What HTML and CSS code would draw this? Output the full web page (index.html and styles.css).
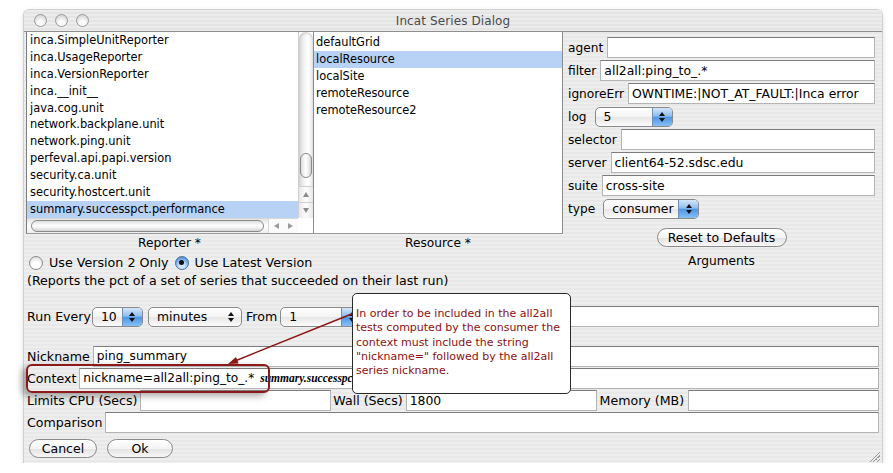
FILE: index.html
```html
<!DOCTYPE html>
<html>
<head>
<meta charset="utf-8">
<link rel="stylesheet" href="styles.css">
</head>
<body>
<div class="window">
  <div class="titlebar">
    <div class="lights"><span class="light"></span><span class="light"></span><span class="light"></span></div>
    <div class="title">Incat Series Dialog</div>
    <div></div>
  </div>
  <div class="content">
    <div class="top">
      <div class="leftcol">
        <div class="lists">
          <div class="list-rep">
            <div class="rows">
              <div class="row">inca.SimpleUnitReporter</div>
              <div class="row">inca.UsageReporter</div>
              <div class="row">inca.VersionReporter</div>
              <div class="row">inca.__init__</div>
              <div class="row">java.cog.unit</div>
              <div class="row">network.backplane.unit</div>
              <div class="row">network.ping.unit</div>
              <div class="row">perfeval.api.papi.version</div>
              <div class="row">security.ca.unit</div>
              <div class="row">security.hostcert.unit</div>
              <div class="row sel">summary.successpct.performance</div>
            </div>
            <div class="vscroll">
              <div class="vtrack"><div class="vthumb"></div></div>
              <div class="varrow"><span class="tri-up"></span></div>
              <div class="varrow"><span class="tri-down"></span></div>
            </div>
            <div class="hscroll">
              <div class="htrack"><div class="hthumb"></div></div>
              <div class="harrows"><span class="tri-left"></span><span class="tri-right"></span></div>
            </div>
            <div class="corner"></div>
          </div>
          <div class="list-res">
            <div class="row">defaultGrid</div>
            <div class="row sel">localResource</div>
            <div class="row">localSite</div>
            <div class="row">remoteResource</div>
            <div class="row">remoteResource2</div>
          </div>
        </div>
        <div class="captions">
          <div class="cap-rep">Reporter *</div>
          <div class="cap-res">Resource *</div>
        </div>
        <div class="radios">
          <span class="radio"></span><span class="radio-label">Use Version 2 Only</span>
          <span class="radio on"><span class="dot"></span></span><span class="radio-label">Use Latest Version</span>
        </div>
      </div>
      <div class="args">
        <div class="arg"><span class="lbl">agent</span><div class="field"></div></div>
        <div class="arg"><span class="lbl">filter</span><div class="field">all2all:ping_to_.*</div></div>
        <div class="arg"><span class="lbl">ignoreErr</span><div class="field">OWNTIME:|NOT_AT_FAULT:|Inca error</div></div>
        <div class="arg"><span class="lbl">log</span>
          <div class="popup p-log"><span class="pv">5</span><span class="pa"><span class="au"></span><span class="ad"></span></span></div>
        </div>
        <div class="arg"><span class="lbl">selector</span><div class="field"></div></div>
        <div class="arg"><span class="lbl">server</span><div class="field">client64-52.sdsc.edu</div></div>
        <div class="arg"><span class="lbl">suite</span><div class="field">cross-site</div></div>
        <div class="arg"><span class="lbl">type</span>
          <div class="popup p-type"><span class="pv">consumer</span><span class="pa"><span class="au"></span><span class="ad"></span></span></div>
        </div>
        <div class="btn reset">Reset to Defaults</div>
        <div class="args-cap">Arguments</div>
      </div>
    </div>
    <div class="bottom">
      <div class="desc">(Reports the pct of a set of series that succeeded on their last run)</div>
      <div class="run">
        <span class="lbl">Run Every</span>
        <div class="popup p-10"><span class="pv">10</span><span class="pa"><span class="au"></span><span class="ad"></span></span></div>
        <div class="popup p-min"><span class="pv">minutes</span><span class="pa plain"><span class="au"></span><span class="ad"></span></span></div>
        <span class="lbl">From</span>
        <div class="popup p-1"><span class="pv">1</span><span class="pa"><span class="au"></span><span class="ad"></span></span></div>
        <div class="field"></div>
      </div>
      <div class="frow"><span class="lbl">Nickname</span><div class="field">ping_summary</div></div>
      <div class="frow"><span class="lbl">Context</span><div class="field">nickname=all2all:ping_to_.* <span class="ctx-extra">summary.successpct.performance</span></div></div>
      <div class="limits">
        <span class="lbl">Limits CPU (Secs)</span><div class="field"></div>
        <span class="lbl">Wall (Secs)</span><div class="field">1800</div>
        <span class="lbl mem">Memory (MB)</span><div class="field"></div>
      </div>
      <div class="frow"><span class="lbl">Comparison</span><div class="field"></div></div>
      <div class="buttons">
        <div class="btn cancel">Cancel</div>
        <div class="btn ok">Ok</div>
      </div>
    </div>
  </div>
  <div class="grip"></div>
  <div class="highlight"></div>
  <svg class="arrow" width="858" height="453" viewBox="0 0 858 453">
    <line x1="330" y1="303" x2="211" y2="351" stroke="#8a1616" stroke-width="1.4"/>
    <polygon points="204,354 214.6,353.5 212,347" fill="#8a1616"/>
  </svg>
  <div class="tooltip">In order to be included in the all2all<br>tests computed by the consumer the<br>context must include the string<br>"nickname=" followed by the all2all<br>series nickname.</div>
</div>
</body>
</html>
```
FILE: styles.css
```css
* { box-sizing: border-box; }
html, body { margin: 0; background: #fff; }
body {
  padding: 10px 0 0 24px;
  font-family: "DejaVu Sans", "Noto Sans", sans-serif;
  font-size: 12.4px;
  color: #000;
}
.window {
  position: relative;
  width: 858px;
  height: 453px;
  border-radius: 5px 5px 0 0;
  background: repeating-linear-gradient(#eeeeee 0 2px, #e8e8e8 2px 4px);
  box-shadow: 0 0 0 1px #cfcfcf, 0 2px 6px rgba(0,0,0,0.15);
  display: flex;
  flex-direction: column;
}
.titlebar {
  height: 22px;
  flex: none;
  border-bottom: 1px solid #8e8e8e;
  border-radius: 5px 5px 0 0;
  background: repeating-linear-gradient(#ececec 0 2px, #e4e4e4 2px 4px);
  display: grid;
  grid-template-columns: 1fr auto 1fr;
  align-items: center;
}
.lights { display: flex; gap: 8px; padding-left: 10px; }
.light {
  width: 13px; height: 13px; border-radius: 50%;
  border: 1px solid #9a9a9a;
  background: radial-gradient(circle at 50% 75%, #fafafa 0 30%, #dcdcdc 70%, #c8c8c8);
}
.title { font-size: 12px; color: #4a4a4a; letter-spacing: 0.1px; }

.content { flex: 1; display: flex; flex-direction: column; padding-left: 2px; }
.top { display: flex; }
.leftcol { width: 537px; flex: none; }
.lists { display: flex; height: 202px; font-size: 11.4px; }
.list-rep {
  width: 287px;
  background: #fff;
  border-left: 1px solid #7d7d7d;
  border-bottom: 1px solid #9a9a9a;
  display: grid;
  grid-template-columns: 1fr 15px;
  grid-template-rows: 186px 15px;
}
.rows { overflow: hidden; }
.row { height: 16.9px; line-height: 17px; padding-left: 3px; white-space: nowrap; }
.row.sel { background: #b8d2f6; }
.list-res {
  width: 250px;
  background: #fff;
  border-left: 1px solid #8c8c8c;
  border-right: 1px solid #8c8c8c;
  border-bottom: 1px solid #9a9a9a;
  padding-top: 2px;
}
.list-res .row { padding-left: 2px; }

.vscroll { display: flex; flex-direction: column; border-left: 1px solid #cfcfcf; }
.vtrack {
  flex: 1;
  display: flex; flex-direction: column;
  border-radius: 7px 7px 0 0;
  background: linear-gradient(to right, #d6d6d6, #f2f2f2 35%, #ffffff 65%, #e6e6e6);
  box-shadow: inset 0 2px 2px rgba(0,0,0,0.12);
  padding: 0 1px 8px 1px;
}
.vthumb {
  margin-top: auto;
  height: 25px;
  border: 1px solid #8a8a8a;
  border-radius: 7px;
  background: linear-gradient(to right, #dcdcdc, #ffffff 45%, #f2f2f2 70%, #cfcfcf);
}
.varrow {
  height: 16px; display: flex; align-items: center; justify-content: center;
  border-top: 1px solid #d0d0d0;
  background: linear-gradient(to right, #e8e8e8, #fdfdfd 50%, #e8e8e8);
}
.tri-up { width: 0; height: 0; border-left: 3.5px solid transparent; border-right: 3.5px solid transparent; border-bottom: 5px solid #8a8a8a; }
.tri-down { width: 0; height: 0; border-left: 3.5px solid transparent; border-right: 3.5px solid transparent; border-top: 5px solid #8a8a8a; }
.tri-left { width: 0; height: 0; border-top: 3.5px solid transparent; border-bottom: 3.5px solid transparent; border-right: 5px solid #9a9a9a; }
.tri-right { width: 0; height: 0; border-top: 3.5px solid transparent; border-bottom: 3.5px solid transparent; border-left: 5px solid #9a9a9a; }
.hscroll { display: flex; border-top: 1px solid #d8d8d8; }
.htrack {
  flex: 1; padding: 1px 4px 1px 4px;
  background: linear-gradient(#e4e4e4, #ffffff 50%, #eeeeee);
}
.hthumb {
  height: 12px;
  border: 1px solid #8a8a8a;
  border-radius: 7px;
  background: linear-gradient(#dedede, #ffffff 45%, #f0f0f0 70%, #d2d2d2);
}
.harrows { width: 30px; display: flex; align-items: center; justify-content: space-around; background: #fbfbfb; border-left: 1px solid #d6d6d6; }
.corner { background: #fff; }

.captions { display: flex; height: 19px; line-height: 18px; font-size: 12.2px; }
.cap-rep { width: 287px; text-align: center; }
.cap-res { width: 250px; text-align: center; }
.radios { display: flex; align-items: center; height: 19px; padding-left: 3px; font-size: 12.7px; }
.radio {
  width: 14px; height: 14px; border-radius: 50%;
  border: 1px solid #8a8a8a;
  background: radial-gradient(circle at 50% 70%, #ffffff 0 35%, #e2e2e2 75%, #cfcfcf);
  display: flex; align-items: center; justify-content: center;
}
.radio.on {
  border-color: #4a6f9e;
  background: radial-gradient(circle at 50% 75%, #cfe6ff 0 25%, #6fa8e8 65%, #3c7fd0);
}
.dot { width: 5px; height: 5px; border-radius: 50%; background: #111; }
.radio-label { margin: 0 6px 0 6px; }

.args { flex: 1; padding: 5px 7px 0 5px; display: flex; flex-direction: column; font-size: 12.2px; }
.arg { display: flex; align-items: center; height: 21px; margin-bottom: 2px; }
.lbl { white-space: nowrap; }
.field {
  flex: 1;
  height: 21px;
  margin-left: 4px;
  background: #fff;
  border: 1px solid #b4b4b4;
  border-top-color: #7c7c7c;
  padding-left: 3px;
  line-height: 19px;
  white-space: nowrap;
  overflow: hidden;
  font-size: 12.4px;
}
.popup {
  display: flex;
  height: 20px;
  margin-left: 8px;
  border: 1px solid #8a8a8a;
  border-radius: 5px;
  background: linear-gradient(#ffffff, #f3f3f3 50%, #e6e6e6 51%, #fbfbfb);
  overflow: hidden;
  font-size: 12.4px;
}
.pv { flex: 1; padding-left: 8px; line-height: 18px; white-space: nowrap; }
.pa {
  width: 20px;
  border-left: 1px solid #6f8fbe;
  background: linear-gradient(#d3e6fb, #8dbdf0 45%, #4f96e6 52%, #86c0f4);
  display: flex; flex-direction: column; align-items: center; justify-content: center; gap: 2px;
}
.pa.plain { background: transparent; border-left: none; }
.au { width: 0; height: 0; border-left: 3px solid transparent; border-right: 3px solid transparent; border-bottom: 4px solid #111; }
.ad { width: 0; height: 0; border-left: 3px solid transparent; border-right: 3px solid transparent; border-top: 4px solid #111; }
.p-log { width: 78px; }
.p-type { width: 96px; }
.p-10 { width: 51px; margin-left: 1px; }
.p-min { width: 94px; margin-left: 5px; margin-right: 4px; }
.p-1 { width: 82px; margin-left: 3px; }

.btn {
  height: 19px;
  border: 1px solid #8a8a8a;
  border-radius: 10px;
  background: linear-gradient(#ffffff, #f4f4f4 50%, #e2e2e2 51%, #f7f7f7);
  text-align: center;
  line-height: 17px;
  font-size: 12.5px;
}
.reset { width: 130px; align-self: center; margin-top: 7px; }
.args-cap { text-align: center; margin-top: 6px; line-height: 17px; }

.bottom { display: flex; flex-direction: column; padding: 0 3px 0 1px; font-size: 12.6px; }
.desc { height: 17px; line-height: 17px; }
.run { display: flex; align-items: center; height: 21px; margin-top: 17px; }
.run .field { margin-left: 3px; }
.frow { display: flex; align-items: center; height: 21px; margin-top: 1px; }
.frow .field { margin-left: 3px; font-size: 12.2px; }
.run + .frow { margin-top: 19px; }
.ctx-extra { font-family: "Liberation Serif", serif; font-weight: bold; font-style: italic; font-size: 11.5px; margin-left: 2px; }
.limits {
  display: grid;
  grid-template-columns: auto 1fr auto 1fr auto 1fr;
  column-gap: 2px;
  align-items: center;
  height: 21px;
  margin-top: 1px;
}
.limits .field { margin-left: 1px; }
.mem { padding: 0 1px; }
.buttons { display: flex; gap: 10px; margin-top: 6px; padding-left: 2px; }
.cancel { width: 68px; }
.ok { width: 66px; }

.grip {
  position: absolute; right: 2px; bottom: 1px; width: 12px; height: 12px;
  background: linear-gradient(135deg, transparent 0 55%, #9a9a9a 55% 60%, transparent 60% 70%, #9a9a9a 70% 75%, transparent 75% 85%, #9a9a9a 85% 90%, transparent 90%);
}
.highlight {
  position: absolute; left: 2px; top: 354px; width: 244px; height: 29px;
  border: 2px solid #8c1a1a; border-radius: 6px;
  box-shadow: -4px 3px 7px rgba(0,0,0,0.35);
}
.arrow { position: absolute; left: 0; top: 0; pointer-events: none; }
.tooltip {
  position: absolute; left: 328px; top: 283px; width: 219px; height: 101px;
  background: #fff;
  border: 1px solid #2a2a2a;
  border-radius: 5px;
  padding: 13px 0 0 3px;
  color: #8b1010;
  font-size: 11px;
  line-height: 14.3px;
  white-space: nowrap;
  overflow: hidden;
}
```
